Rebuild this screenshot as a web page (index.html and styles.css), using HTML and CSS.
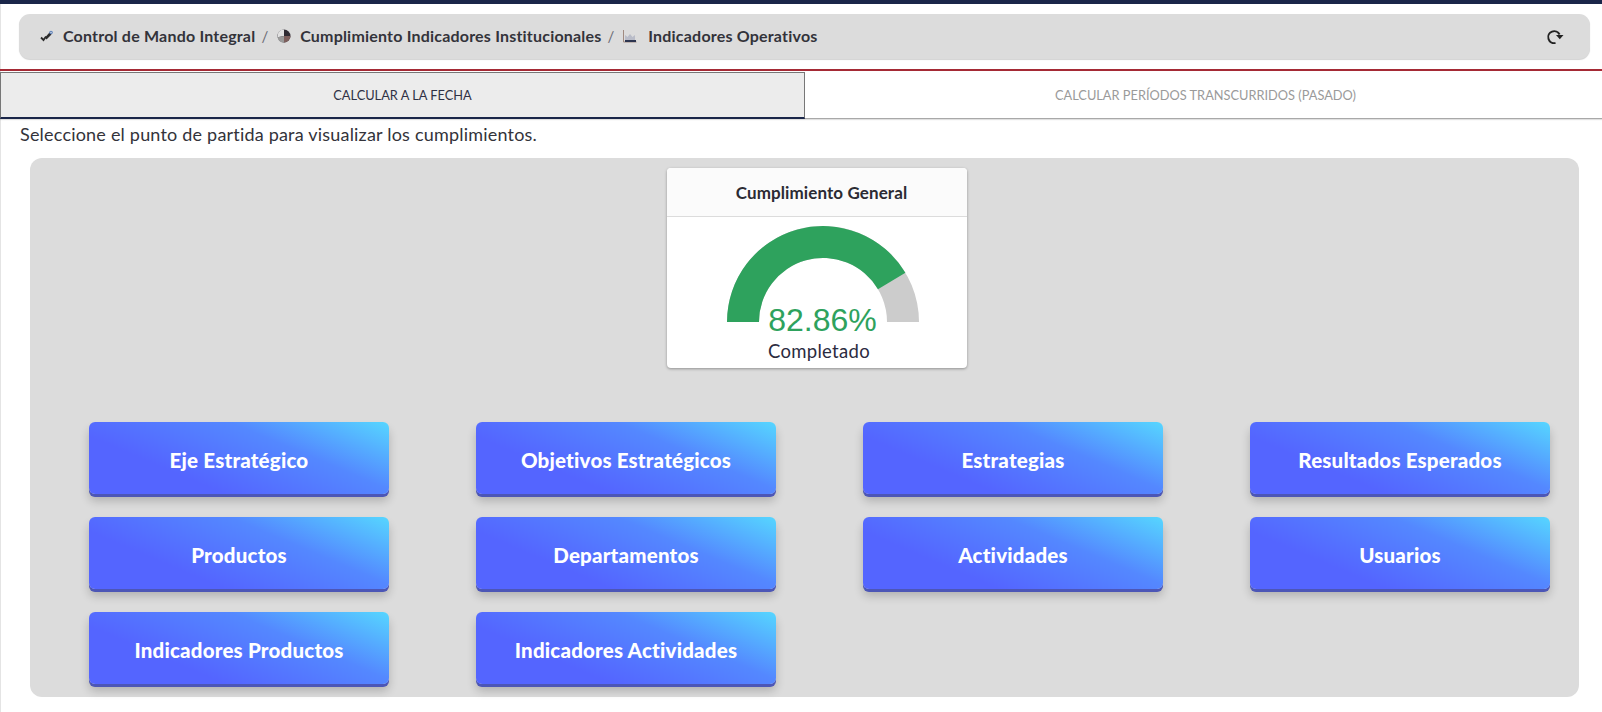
FILE: index.html
```html
<!DOCTYPE html>
<html>

<head>
  <meta charset="utf-8">
  <title>Indicadores Operativos</title>
  <link rel="stylesheet" href="styles.css">
</head>

<body>
  <div class="topbar"></div>

  <!-- breadcrumb -->
  <div class="crumbs">
    <div class="crumb-list">
      <svg class="crumb-icon" width="16" height="16" viewBox="0 0 16 16">
        <path d="M2 9.500l2.500 2.500L7 8.500" fill="none" stroke="#2b2b2b" stroke-width="1.800" />
        <path d="M6 9.500l4.500-5 2 2-5 5z" fill="#2b2b2b" />
        <circle cx="12" cy="4.500" r="1.800" fill="#5b7fb8" />
        <circle cx="12" cy="4.500" r="0.700" fill="#e8e8e8" />
      </svg>
      <span class="crumb crumb-first">Control de Mando Integral</span>
      <span class="crumb-sep">/</span>
      <svg class="crumb-icon" width="16" height="16" viewBox="0 0 16 16">
        <circle cx="8" cy="8" r="6.500" fill="#2f2b33" />
        <path d="M8 8V1.500A6.500 6.500 0 0 0 1.600 9.200z" fill="#e2e2e2" />
        <path d="M8 8L1.600 9.200A6.500 6.500 0 0 0 8 14.500z" fill="#9a9a9a" />
        <path d="M8 8h6.500A6.500 6.500 0 0 1 8 14.500z" fill="#7d5f5c" />
      </svg>
      <span class="crumb crumb-second">Cumplimiento Indicadores Institucionales</span>
      <span class="crumb-sep">/</span>
      <svg class="crumb-icon" width="16" height="16" viewBox="0 0 16 16">
        <path d="M1.500 2v12h13" fill="none" stroke="#a08a80" stroke-width="1" />
        <path d="M3 12V7l2.500 2L8 6l2.500 3L13 7v5z" fill="#b9bcc8" />
        <path d="M3 13h11" stroke="#2c3550" stroke-width="2" />
      </svg>
      <span class="crumb crumb-third">Indicadores Operativos</span>
    </div>
    <svg class="reload" width="18" height="18" viewBox="0 0 18 18">
      <path d="M13.600 6.500A6 6 0 1 0 9.500 15" fill="none" stroke="#222" stroke-width="1.900" />
      <path d="M10 7h7.500l-3.700 4.200z" fill="#222" />
    </svg>
  </div>

  <div class="red-line"></div>

  <div class="tabs">
    <div class="tab tab-active">CALCULAR A LA FECHA</div>
    <div class="tab tab-past">CALCULAR PERÍODOS TRANSCURRIDOS (PASADO)</div>
  </div>

  <p class="intro">Seleccione el punto de partida para visualizar los cumplimientos.</p>

  <div class="panel">
    <div class="card">
      <div class="card-head">Cumplimiento General</div>
      <div class="card-body">
        <svg class="gauge" width="300" height="126" viewBox="0 0 300 126">
          <path d="M60 106A96 96 0 0 1 252 106H220A64 64 0 0 0 92 106z" fill="#cccccc" />
          <path d="M60 106A96 96 0 0 1 238.400 56.800L210.950 73.200A64 64 0 0 0 92 106z" fill="#2ea25d" />
          <text class="gauge-value" x="155.500" y="115" text-anchor="middle">82.86%</text>
        </svg>
        <div class="gauge-label">Completado</div>
      </div>
    </div>

    <div class="buttons">
      <a class="btn">Eje Estratégico</a>
      <a class="btn">Objetivos Estratégicos</a>
      <a class="btn">Estrategias</a>
      <a class="btn">Resultados Esperados</a>
      <a class="btn">Productos</a>
      <a class="btn">Departamentos</a>
      <a class="btn">Actividades</a>
      <a class="btn">Usuarios</a>
      <a class="btn">Indicadores Productos</a>
      <a class="btn">Indicadores Actividades</a>
    </div>
  </div>
</body>

</html>
```

FILE: styles.css
```css
html,
body {
  margin: 0;
  padding: 0;
}

body {
  height: 712px;
  overflow: hidden;
  background-color: #ffffff;
  box-shadow: inset 1px 0 0 #e4e4e4;
  color: #2b2b33;
  font-family: "Lato", "Liberation Sans", sans-serif;
}

.topbar {
  height: 4px;
  background-color: #1a2649;
}

.crumbs {
  display: flex;
  align-items: center;
  justify-content: space-between;
  height: 45px;
  margin: 10px 12px 0 19px;
  padding: 0 26px 0 20px;
  border-radius: 11px;
  background-color: #dcdcdc;
  box-shadow: 0 1px 1px rgba(0, 0, 0, 0.18);
}

.crumb-list {
  display: flex;
  align-items: center;
  padding-bottom: 2px;
}

.crumb-icon {
  flex: none;
}

.crumb {
  font-size: 16px;
  font-weight: 700;
  letter-spacing: 0.2px;
  color: #33333a;
}

.crumb-first {
  margin-left: 8px;
}

.crumb-second {
  margin-left: 8px;
}

.crumb-third {
  margin-left: 10px;
}

.crumb-sep {
  margin: 0 8px 0 6px;
  font-size: 15px;
  color: #6b6b75;
}

.red-line {
  height: 2px;
  margin-top: 10px;
  background-color: #a52a35;
}

.tabs {
  display: flex;
  height: 47px;
  margin-top: 1px;
  border-bottom: 1px solid #a8a8a8;
  box-sizing: border-box;
  box-shadow: 0 1px 1px rgba(0, 0, 0, 0.12);
}

.tab {
  flex: 1;
  display: flex;
  align-items: center;
  justify-content: center;
  font-size: 12.800px;
  color: #9a9a9a;
}

.tab-past {
  padding-left: 4px;
}

.tab-active {
  flex: none;
  width: 805px;
  box-sizing: border-box;
  height: 47px;
  background-color: #ececec;
  border: 1px solid #777777;
  border-bottom: 2px solid #1a2649;
  color: #2f3145;
}

.intro {
  margin: 5px 0 0 20px;
  font-size: 18px;
  line-height: 20px;
  letter-spacing: 0.2px;
  color: #33333a;
}

.panel {
  height: 539px;
  margin: 14px 23px 0 30px;
  padding: 10px 29px 0 59px;
  box-sizing: border-box;
  border-radius: 12px;
  background-color: #dcdcdc;
}

.card {
  width: 300px;
  height: 200px;
  margin-left: 578px;
  border-radius: 4px;
  overflow: hidden;
  background-color: #ffffff;
  box-shadow: 0 1px 3px rgba(0, 0, 0, 0.35);
}

.card-head {
  height: 49px;
  padding-left: 9px;
  line-height: 49px;
  box-sizing: border-box;
  border-bottom: 1px solid #dcdcdc;
  background-color: #fbfbfb;
  text-align: center;
  font-size: 17px;
  font-weight: 700;
  letter-spacing: 0.1px;
  color: #2b2b33;
}

.gauge {
  display: block;
  margin: -1px 0 -2px;
}

.gauge-value {
  font-family: "Liberation Sans", Arial, sans-serif;
  font-size: 32px;
  fill: #2ea25d;
}

.gauge-label {
  padding-left: 4px;
  text-align: center;
  font-size: 18.500px;
  line-height: 22px;
  letter-spacing: 0.3px;
  color: #2b2b40;
}

.buttons {
  display: grid;
  grid-template-columns: repeat(4, 300px);
  column-gap: 87px;
  row-gap: 20px;
  margin-top: 54px;
}

.btn {
  display: flex;
  align-items: center;
  justify-content: center;
  height: 72px;
  margin-bottom: 3px;
  padding-top: 3px;
  box-sizing: border-box;
  border-radius: 6px;
  background-image: linear-gradient(23deg, #5465ff 29%, #5488ff 66%, #56d6ff 100%);
  box-shadow: 0 3px 0 #4c56b6, 0 7px 10px rgba(0, 0, 0, 0.2);
  color: #ffffff;
  font-size: 20.500px;
  font-weight: 900;
  letter-spacing: 0.2px;
}
```
